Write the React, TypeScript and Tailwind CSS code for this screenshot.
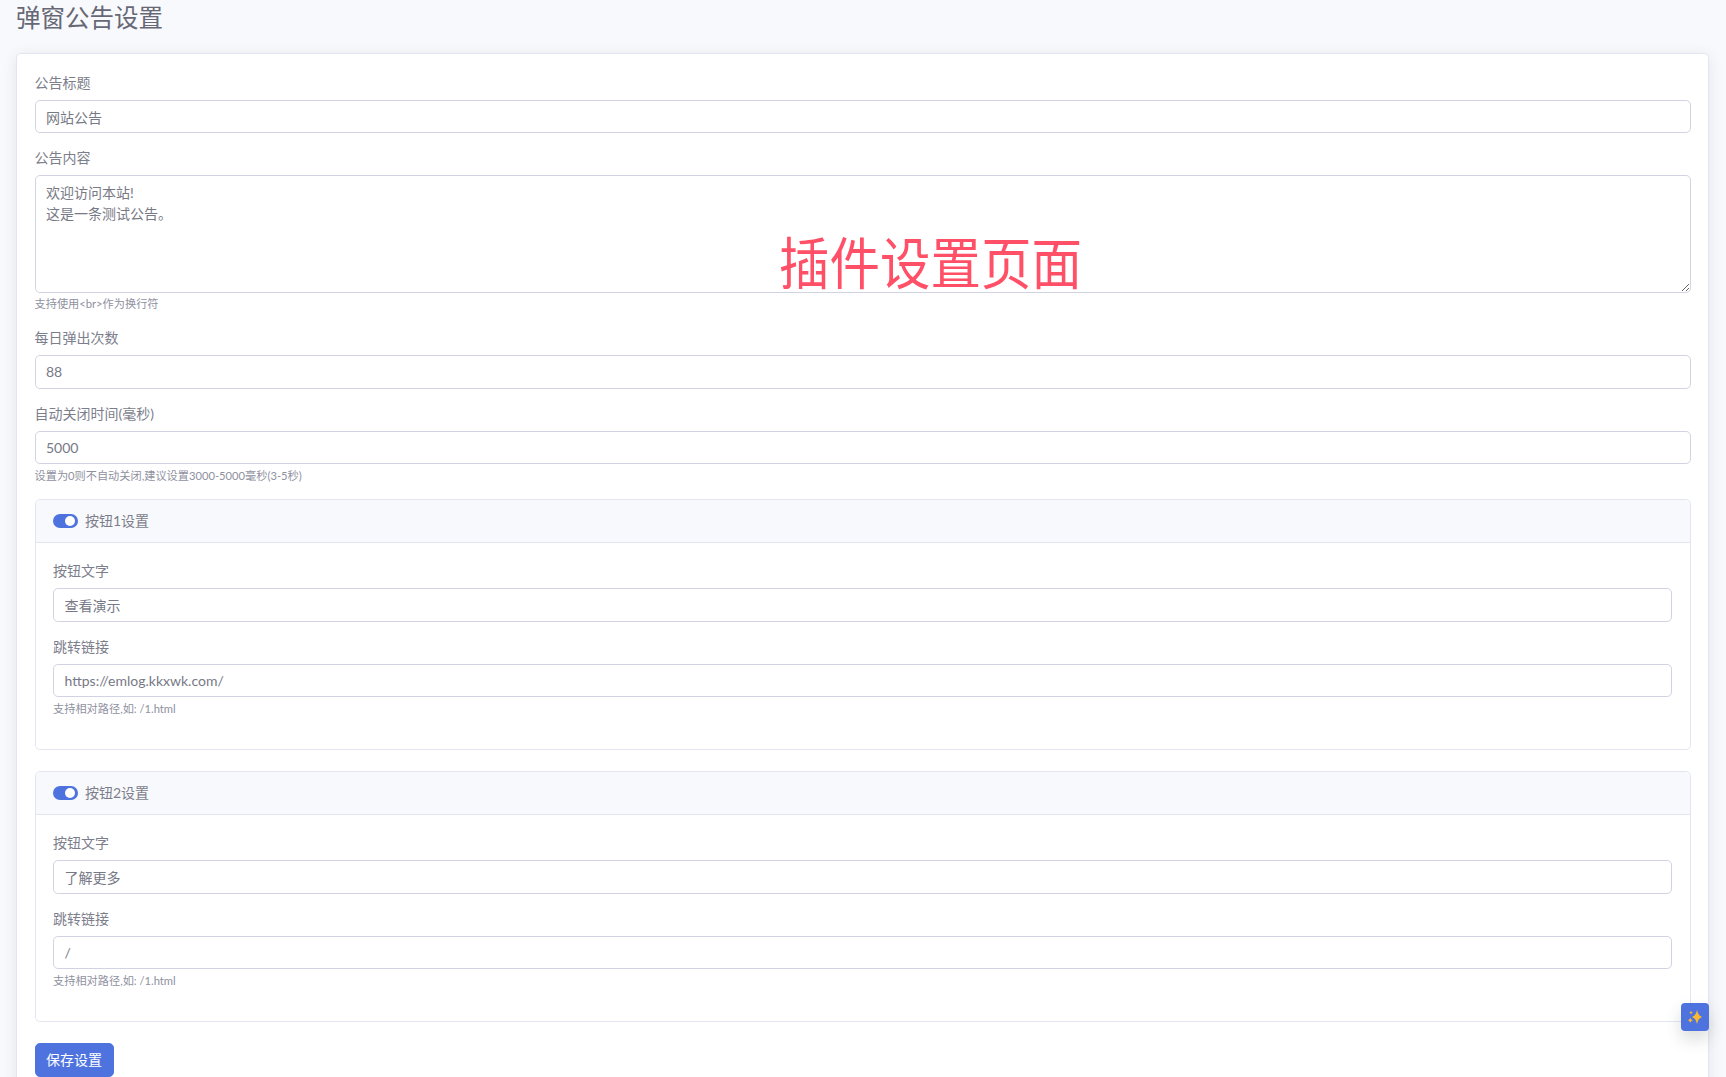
import React from "react";

const font = "[font-family:'Lato','Noto_Sans_CJK_SC',sans-serif]";

function TextInput({ value }: { value: string }) {
  return (
    <input
      readOnly
      value={value}
      className="block w-full h-[33.5px] px-[10.5px] py-[5.25px] text-[14px] leading-[21px] text-[#777986] bg-white border border-[#d1d3e2] rounded-[4.9px] outline-none"
    />
  );
}

function Field({ label, value, help }: { label: string; value: string; help?: string }) {
  return (
    <div className="mb-[14px]">
      <label className="block mb-[7px] text-[14px] leading-[21px] text-[#7c7e8b]">{label}</label>
      <TextInput value={value} />
      {help && <small className="block mt-[3.5px] text-[11.2px] leading-[16.8px] text-[#8f919f]">{help}</small>}
    </div>
  );
}

function ButtonCard({ title, text, link }: { title: string; text: string; link: string }) {
  return (
    <div className="mb-[21px] bg-white border border-[#e3e6f0] rounded-[4.9px]">
      <div className="flex items-center h-[43px] px-[17.5px] bg-[#f8f9fc] border-b border-[#e3e6f0] rounded-t-[4px]">
        {/* switch */}
        <span className="flex items-center justify-end w-[25px] h-[14px] pr-[3px] rounded-full bg-[#4e73df]">
          <span className="w-[10px] h-[10px] rounded-full bg-white" />
        </span>
        <span className="ml-[7px] text-[14px] leading-[21px] text-[#7c7e8b]">{title}</span>
      </div>
      <div className="p-[17.5px]">
        <Field label="按钮文字" value={text} />
        <Field label="跳转链接" value={link} help="支持相对路径,如: /1.html" />
      </div>
    </div>
  );
}

export default function App() {
  return (
    <div className={`relative h-screen overflow-hidden bg-[#f8f9fc] pl-4 pr-[17px] pt-[3px] ${font}`}>
      <h3 className="mb-[21px] text-[24.5px] leading-[29.4px] font-normal text-[#666875]">弹窗公告设置</h3>

      <div className="bg-white border border-[#e3e6f0] rounded-[4.9px] shadow-[0_2px_14px_rgba(58,59,69,0.1)] p-[17.5px]">
        <Field label="公告标题" value="网站公告" />
        <div className="mb-[14px]">
          <label className="block mb-[7px] text-[14px] leading-[21px] text-[#7c7e8b]">公告内容</label>
          <textarea
            readOnly
            rows={5}
            defaultValue={"欢迎访问本站!\n这是一条测试公告。"}
            className="block w-full h-[117.5px] px-[10.5px] py-[5.25px] text-[14px] leading-[21px] text-[#777986] bg-white border border-[#d1d3e2] rounded-[4.9px] outline-none"
          />
          <small className="block mt-[3.5px] text-[11.2px] leading-[16.8px] text-[#8f919f]">支持使用&lt;br&gt;作为换行符</small>
        </div>
        <Field label="每日弹出次数" value="88" />
        <Field label="自动关闭时间(毫秒)" value="5000" help="设置为0则不自动关闭,建议设置3000-5000毫秒(3-5秒)" />

        <ButtonCard title="按钮1设置" text="查看演示" link="https://emlog.kkxwk.com/" />
        <ButtonCard title="按钮2设置" text="了解更多" link="/" />

        <button className="h-[33.5px] w-[79px] text-[14px] leading-[21px] text-white bg-[#4e73df] border border-[#4e73df] rounded-[4.9px]">
          保存设置
        </button>
      </div>

      {/* red caption laid over the form */}
      <div className="absolute left-[779px] top-[228px] text-[50.5px] leading-[64px] whitespace-nowrap text-[#ff5067] origin-center scale-y-110 [font-family:'Noto_Sans_CJK_SC',sans-serif]">
        插件设置页面
      </div>

      {/* floating sparkle button */}
      <div className="absolute left-[1681px] top-[1003px] flex items-center justify-center w-[28px] h-[28px] rounded-[4px] bg-[#4e73df] shadow-[0_8px_16px_rgba(58,59,69,0.18)]">
        <svg width="14" height="14" viewBox="0 0 14 14" fill="#fdb92e">
          <path d="M9 0 Q10.2 5.8 14 7 Q10.2 8.2 9 14 Q7.8 8.2 4 7 Q7.8 5.8 9 0 Z" />
          <path d="M3 1 Q3.4 2.4 4.7 2.7 Q3.4 3 3 4.4 Q2.6 3 1.3 2.7 Q2.6 2.4 3 1 Z" />
          <path d="M2.3 7.8 Q2.8 9.8 4.8 10.3 Q2.8 10.8 2.3 12.8 Q1.8 10.8 -0.2 10.3 Q1.8 9.8 2.3 7.8 Z" />
        </svg>
      </div>
    </div>
  );
}
